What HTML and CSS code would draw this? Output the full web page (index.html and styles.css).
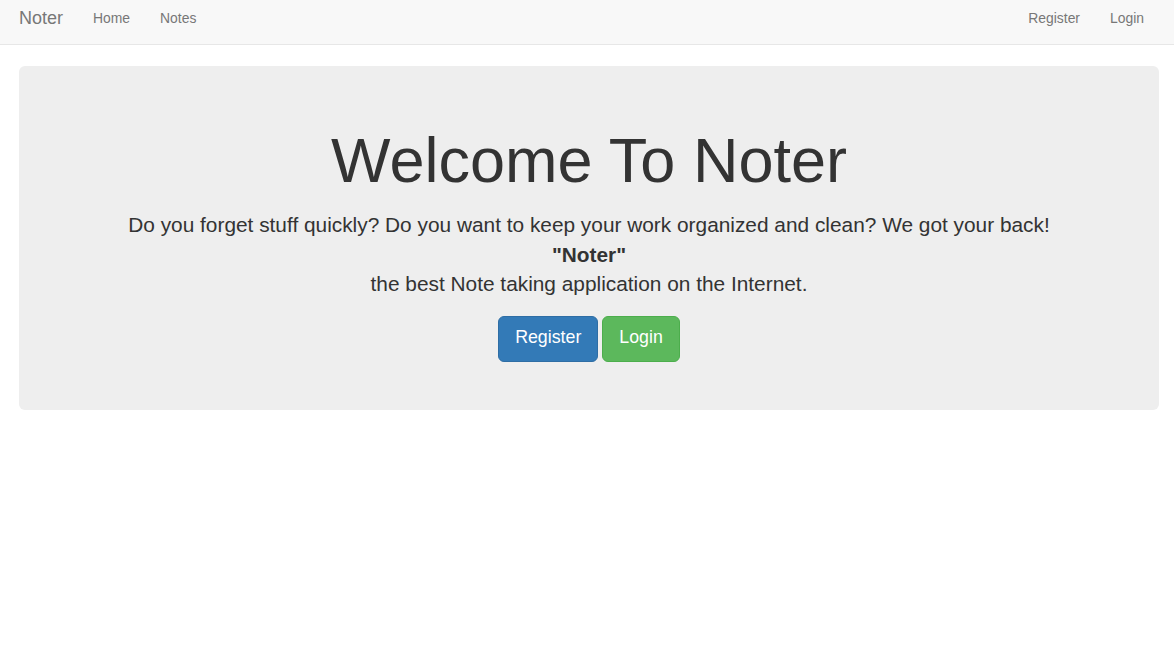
FILE: index.html
```html
<!DOCTYPE html>
<html lang="en">
<head>
<meta charset="utf-8">
<title>Noter</title>
<link rel="stylesheet" href="styles.css">
</head>
<body>
<nav class="navbar">
  <div class="nav-left">
    <a class="brand" href="#">Noter</a>
    <a class="nav-link" href="#">Home</a>
    <a class="nav-link" href="#">Notes</a>
  </div>
  <div class="nav-right">
    <a class="nav-link" href="#">Register</a>
    <a class="nav-link" href="#">Login</a>
  </div>
</nav>
<main class="page">
  <section class="jumbotron">
    <h1 class="title">Welcome To Noter</h1>
    <p class="lead">Do you forget stuff quickly? Do you want to keep your work organized and clean? We got your back!<br><strong>"Noter"</strong><br>the best Note taking application on the Internet.</p>
    <div class="actions">
      <a class="btn btn-primary" href="#">Register</a>
      <a class="btn btn-success" href="#">Login</a>
    </div>
  </section>
</main>
</body>
</html>
```
FILE: styles.css
```css
* { box-sizing: border-box; }
html, body {
  margin: 0;
  padding: 0;
  background: #fff;
  font-family: "Liberation Sans", Arial, Helvetica, sans-serif;
  font-size: 14px;
  line-height: 1.42857;
  color: #333;
}
a { text-decoration: none; }

.navbar {
  height: 45px;
  background: #f8f8f8;
  border-bottom: 1px solid #e7e7e7;
  display: flex;
  justify-content: space-between;
  align-items: flex-start;
  padding: 0 15px 0 4px;
}
.nav-left, .nav-right { display: flex; }
.brand {
  font-size: 18px;
  line-height: 20px;
  padding: 8px 15px 0 15px;
  color: #777;
}
.nav-link {
  font-size: 13.9px;
  line-height: 20px;
  padding: 8px 15px 0 15px;
  color: #777;
}

.page {
  padding: 21px 15px 0 19px;
}
.jumbotron {
  background: #eee;
  border-radius: 6px;
  padding: 48px 60px 48px 60px;
  text-align: center;
}
.title {
  font-size: 63px;
  font-weight: 500;
  line-height: 1.1;
  margin: 12px 0 15px 0;
  color: #333;
}
.lead {
  font-size: 20.85px;
  line-height: 29.6px;
  margin: 0 0 17px 0;
}
.lead strong { font-weight: 700; }
.actions {
  display: flex;
  justify-content: center;
  gap: 4px;
}
.btn {
  display: inline-block;
  font-size: 17.8px;
  line-height: 24px;
  padding: 8px 16px 12px 16px;
  border: 1px solid transparent;
  border-radius: 6px;
  color: #fff;
}
.btn-primary { background: #337ab7; border-color: #2e6da4; }
.btn-success { background: #5cb85c; border-color: #4cae4c; }
```
